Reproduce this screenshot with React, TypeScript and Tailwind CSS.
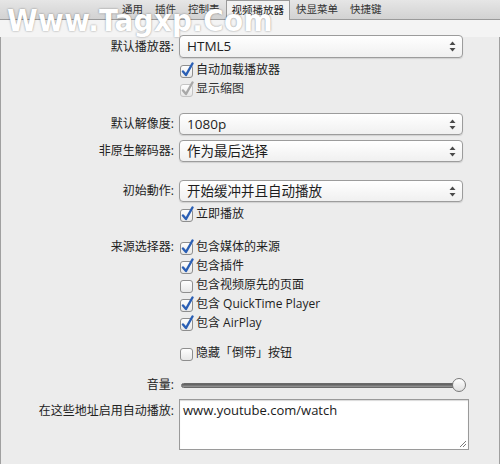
import React from "react";

const font = "font-['Open_Sans','Noto_Sans_CJK_SC',sans-serif]";

function Check({ checked, disabled }: { checked?: boolean; disabled?: boolean }) {
  return (
    <svg width="16" height="16" viewBox="0 0 16 16" className="shrink-0">
      <defs>
        <linearGradient id="cbg" x1="0" y1="0" x2="0" y2="1">
          <stop offset="0" stopColor="#ffffff" />
          <stop offset="1" stopColor="#e6e6e6" />
        </linearGradient>
      </defs>
      <rect x="1.5" y="3.5" width="12" height="12" rx="2.5" fill="url(#cbg)" stroke={disabled ? "#c4c4c4" : "#8e8e8e"} />
      {checked && (
        <path
          d="M4 9.5 L7 13 L13.5 1.5"
          fill="none"
          stroke={disabled ? "#a8a8a8" : "#2a5fb5"}
          strokeWidth="2.4"
          strokeLinecap="round"
          strokeLinejoin="round"
        />
      )}
    </svg>
  );
}

function Select({ value }: { value: string }) {
  return (
    <div className="flex h-full w-[284px] items-center justify-between rounded-[4px] border border-[#9c9c9c] bg-gradient-to-b from-white to-[#f0f0f0] pl-[7px] pr-[6px] shadow-[0_1px_1px_rgba(0,0,0,0.12)]">
      <span className="text-[13.5px] text-[#1e1e1e]">{value}</span>
      <svg width="7" height="11" viewBox="0 0 7 11">
        <path d="M3.5 0.5 L6.5 4 L0.5 4 Z" fill="#4a4a4a" />
        <path d="M3.5 10.5 L6.5 7 L0.5 7 Z" fill="#4a4a4a" />
      </svg>
    </div>
  );
}

function Row({
  label,
  children,
  className,
}: {
  label?: string;
  children: React.ReactNode;
  className?: string;
}) {
  return (
    <div className={`flex ${className ?? ""}`}>
      <div className="w-[174px] shrink-0 pr-[1px] text-right text-[12px] leading-none text-[#222]">
        {label ? `${label}:` : ""}
      </div>
      <div className="ml-[4px] flex-1">{children}</div>
    </div>
  );
}

function CbRow({
  label,
  text,
  checked,
  disabled,
  className,
}: {
  label?: string;
  text: string;
  checked?: boolean;
  disabled?: boolean;
  className?: string;
}) {
  return (
    <div className={`flex h-[19px] items-center ${className ?? ""}`}>
      <div className="w-[174px] shrink-0 pr-[1px] text-right text-[12px] text-[#222]">
        {label ? `${label}:` : ""}
      </div>
      <div className="ml-[4px] flex items-center gap-[1px]">
        <Check checked={checked} disabled={disabled} />
        <span className={`text-[12px] ${disabled ? "text-[#333]" : "text-[#1e1e1e]"}`}>{text}</span>
      </div>
    </div>
  );
}

export default function App() {
  const tabs = ["通用", "插件", "控制表", "视频播放器", "快显菜单", "快捷键"];
  return (
    <div className={`relative h-[464px] w-[500px] overflow-hidden bg-[#f4f4f4] ${font}`}>
      {/* tab strip */}
      <div className="flex h-[20px] items-end border-b border-[#9a9a9a] bg-gradient-to-b from-[#e6e6e6] to-[#d2d2d2] pl-[116px]">
        {tabs.map((t) => {
          const active = t === "视频播放器";
          return (
            <div
              key={t}
              className={
                active
                  ? "relative -mb-px flex h-[20px] items-center border-x border-t border-[#9a9a9a] bg-[#f2f2f2] px-[5px] text-[10.5px] text-[#222]"
                  : "flex h-[19px] items-center px-[6px] text-[10.5px] text-[#333]"
              }
            >
              {t}
            </div>
          );
        })}
      </div>

      {/* panel */}
      <div className="h-[443px] border-x border-b border-[#a0a0a0] bg-[#ececec]">
        <Row label="默认播放器" className="mt-[17px] h-[19px] items-center">
          <Select value="HTML5" />
        </Row>
        <CbRow className="mt-[4px]" text="自动加载播放器" checked />
        <CbRow text="显示缩图" checked disabled />

        <Row label="默认解像度" className="mt-[17px] h-[18px] items-center">
          <Select value="1080p" />
        </Row>
        <Row label="非原生解码器" className="mt-[9px] h-[18px] items-center">
          <Select value="作为最后选择" />
        </Row>

        <Row label="初始動作" className="mt-[22px] h-[18px] items-center">
          <Select value="开始缓冲并且自动播放" />
        </Row>
        <CbRow className="mt-[4px]" text="立即播放" checked />

        <CbRow className="mt-[14px]" label="来源选择器" text="包含媒体的来源" checked />
        <CbRow text="包含插件" checked />
        <CbRow text="包含视频原先的页面" />
        <CbRow text="包含 QuickTime Player" checked />
        <CbRow text="包含 AirPlay" checked />

        <CbRow className="mt-[11px]" text="隐藏「倒带」按钮" />

        <Row label="音量" className="mt-[14px] h-[18px] items-center">
          <div className="relative flex h-[18px] w-[284px] items-center">
            <div className="ml-[2px] h-[5px] w-[278px] rounded-full border border-[#6a6a6a] bg-gradient-to-b from-[#5a5a5a] to-[#9a9a9a]" />
            <div className="absolute left-[273px] top-[2px] h-[14px] w-[14px] rounded-full border border-[#7a7a7a] bg-gradient-to-b from-white to-[#e0e0e0]" />
          </div>
        </Row>

        <Row label="在这些地址启用自动播放" className="mt-[5px] h-[50px] pt-[6px]">
          <div className="relative -mt-[6px] h-[51px] w-[290px] border border-[#9a9a9a] bg-white px-[3px] pt-[1px] text-[13px] text-[#1a1a1a] shadow-[inset_0_1px_1px_rgba(0,0,0,0.15)]">
            www.youtube.com/watch
            <svg className="absolute bottom-[1px] right-[1px]" width="9" height="9" viewBox="0 0 9 9">
              <path d="M8 2 L2 8 M8 5 L5 8" stroke="#7a7a7a" strokeWidth="1" />
            </svg>
          </div>
        </Row>
      </div>

      {/* watermark */}
      <div className="absolute left-[7px] top-[-3px] font-['Liberation_Sans_Narrow','DejaVu_Sans_Condensed',sans-serif] text-[31px] font-bold tracking-[0.3px] text-white [text-shadow:0_0_2px_rgba(0,0,0,0.45)]">
        Www.Tagxp.Com
      </div>
    </div>
  );
}
